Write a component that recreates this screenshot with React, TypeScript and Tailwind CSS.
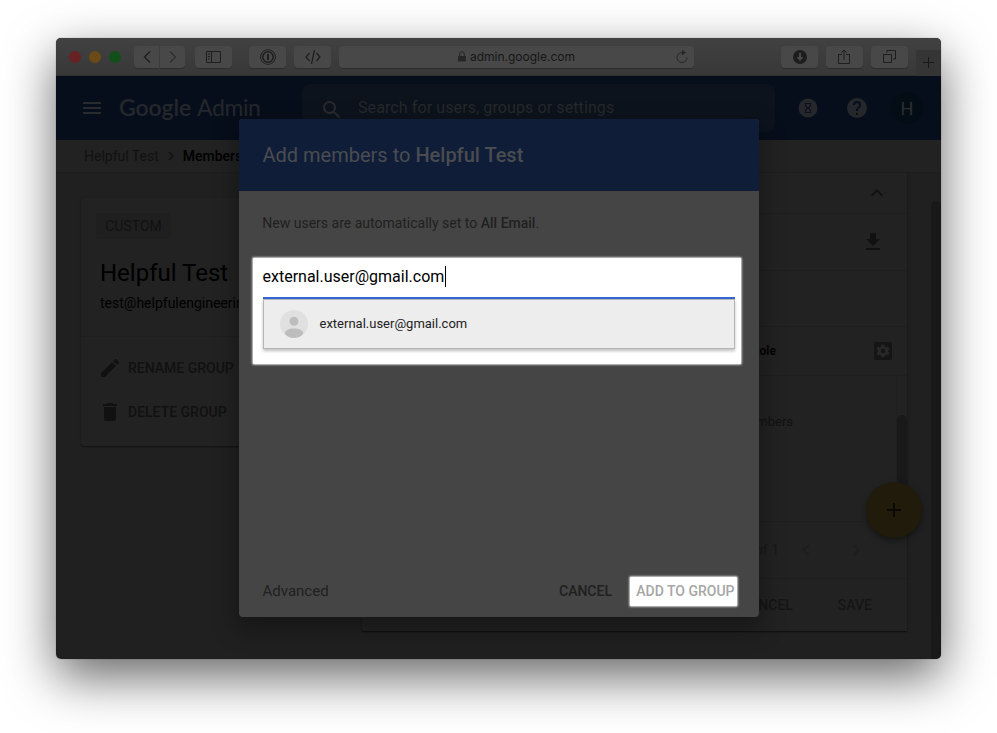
import React from "react";

const Icon = ({ d, className }: { d: string; className: string }) => (
  <svg viewBox="0 0 24 24" fill="currentColor" className={className}>
    <path d={d} />
  </svg>
);

const ToolButton = ({ className, children }: { className: string; children: React.ReactNode }) => (
  <div className={`flex h-[22px] shrink-0 items-center justify-center bg-[#484848] text-[#1d1d1d] shadow-[0_1px_0_#2e2e2e] ${className}`}>
    {children}
  </div>
);

const BrowserBar = () => (
  <div className="relative flex h-[38px] shrink-0 items-center border-b border-[#303030] bg-linear-to-b from-[#414141] to-[#383838] pl-[13px]">
    <div className="flex gap-2">
      <span className="size-3 rounded-full bg-[#672224]" />
      <span className="size-3 rounded-full bg-[#6b4a17]" />
      <span className="size-3 rounded-full bg-[#124f1b]" />
    </div>
    <ToolButton className="ml-[13px] w-[25px] rounded-l">
      <svg viewBox="0 0 10 14" className="h-[14px] w-[10px]" fill="none" stroke="currentColor" strokeWidth="1.4"><path d="M8 1.5 2.5 7 8 12.5" /></svg>
    </ToolButton>
    <ToolButton className="ml-px w-[25px] rounded-r">
      <svg viewBox="0 0 10 14" className="h-[14px] w-[10px] text-[#2d2d2d]" fill="none" stroke="currentColor" strokeWidth="1.2"><path d="M2 1.5 7.5 7 2 12.5" /></svg>
    </ToolButton>
    <ToolButton className="ml-[10px] w-[37px] rounded">
      <svg viewBox="0 0 15 12" className="h-3 w-[15px]" fill="none" stroke="currentColor"><path d="M.5.5h14v11H.5zM5.5.5v11M2 3h2M2 5.500h2M2 8h2" strokeWidth="1" /></svg>
    </ToolButton>
    <ToolButton className="ml-[17px] w-[37px] rounded">
      <svg viewBox="0 0 16 16" className="size-4" fill="none" stroke="currentColor"><circle cx="8" cy="8" r="7.400" strokeWidth=".9" /><circle cx="8" cy="8" r="5.200" strokeWidth="1.500" /><path d="M8 5v6" strokeWidth="2" /></svg>
    </ToolButton>
    <ToolButton className="ml-2 w-[37px] rounded">
      <svg viewBox="0 0 16 16" className="size-4" fill="none" stroke="currentColor" strokeWidth="1.200"><path d="M4.500 4 1 8l3.500 4M11.500 4 15 8l-3.500 4M9.500 1l-3 14" /></svg>
    </ToolButton>
    <ToolButton className="relative ml-2 w-[355px] rounded">
      <svg viewBox="0 0 8 11" className="mr-1 h-[11px] w-2 text-[#262626]"><path d="M0 5h8v5.500H0z" fill="currentColor" /><path d="M1.700 5V3a2.300 2.300 0 0 1 4.600 0v2" fill="none" stroke="currentColor" /></svg>
      <span className="mt-px font-['Inter',sans-serif] text-[12px] text-[#161616]">admin.google.com</span>
      <svg viewBox="0 0 14 14" className="absolute right-[5px] size-[14px] text-[#262626]" fill="none" stroke="currentColor"><path d="M7.500 2.500A5 5 0 1 0 12 7.500" /><path d="m7 0 4 2.600L7 5.200z" fill="currentColor" stroke="none" /></svg>
    </ToolButton>
    <ToolButton className="ml-[87px] w-[37px] rounded">
      <svg viewBox="0 0 14 14" className="size-[14px]"><circle cx="7" cy="7" r="7" fill="currentColor" /><path d="M6 3h2v4h2.500L7 11 3.500 7H6z" fill="#484848" /></svg>
    </ToolButton>
    <ToolButton className="ml-2 w-[37px] rounded">
      <svg viewBox="0 0 12 16" className="mr-px h-4 w-3" fill="none" stroke="currentColor"><path d="M4 5.500H.5v9h11v-9H8M6 11V1M3.500 3.500 6 1l2.500 2.500" /></svg>
    </ToolButton>
    <ToolButton className="ml-2 w-[37px] rounded">
      <svg viewBox="0 0 13 13" className="size-[13px]" fill="none" stroke="currentColor"><path d="M.5 4.500h8v8h-8zM4 2.500v-2h8.500V9H10" /></svg>
    </ToolButton>
    <div className="ml-2 mt-3 flex h-[26px] flex-1 items-center justify-center bg-[#353535]">
      <svg viewBox="0 0 11 11" className="size-[11px]" stroke="#181818"><path d="M5.500 0v11M0 5.500h11" /></svg>
    </div>
  </div>
);

const AdminHeader = () => (
  <div className="flex h-16 shrink-0 bg-[#070e1b] text-[#282a2e]">
    <Icon d="M3 18h18v-2H3v2zm0-5h18v-2H3v2zm0-7v2h18V6H3z" className="ml-6 mt-5 size-6" />
    <div className="ml-[15px] mt-[13px] w-[183px] whitespace-nowrap font-['Lato',sans-serif] text-[23px] leading-9 text-[#24272c]">
      <span className="font-semibold tracking-[-0.1px]">Google</span>
      <span className="ml-[6px] tracking-[-0.4px]">Admin</span>
    </div>
    <div className="mt-2 flex h-12 w-[473px] rounded-lg bg-[#0c131c]">
      <Icon d="M15.500 14h-.79l-.28-.27A6.470 6.470 0 0 0 16 9.500 6.500 6.500 0 1 0 9.500 16c1.610 0 3.090-.59 4.230-1.570l.27.28v.79l5 4.990L20.490 19l-4.990-5zm-6 0C7.010 14 5 11.990 5 9.500S7.010 5 9.500 5 14 7.010 14 9.500 11.990 14 9.500 14z" className="ml-[18px] mt-[14px] size-6" />
      <span className="ml-[14px] mt-3 text-[16px] leading-6 tracking-[0.1px] text-[#25282c]">Search for users, groups or settings</span>
    </div>
    <svg viewBox="0 0 20 20" className="ml-[23px] mt-[22px] size-5"><circle cx="10" cy="10" r="9.500" fill="#25272b" /><path d="M7.500 5.500h5v2L10.500 10l2 2.500v2h-5v-2l2-2.500-2-2.500z" fill="none" stroke="#0a101b" strokeWidth="1.200" /></svg>
    <Icon d="M12 2a10 10 0 1 0 0 20 10 10 0 0 0 0-20zm1 17h-2v-2h2v2zm2.070-7.750-.9.920C13.450 12.900 13 13.500 13 15h-2v-.5c0-1.100.45-2.100 1.170-2.830l1.240-1.260c.37-.36.59-.86.59-1.410a2 2 0 1 0-4 0H8a4 4 0 1 1 8 0c0 .88-.36 1.680-.93 2.250z" className="ml-[27px] mt-5 size-6 text-[#25272b]" />
    <span className="ml-[22px] mt-4 flex size-8 items-center justify-center rounded-full bg-[#030d16] pt-px text-[18px] text-[#2c2e30]">H</span>
  </div>
);

const GroupCard = () => (
  <div className="ml-px mt-[25px] h-[248px] w-[259px] rounded-sm bg-[#222222] shadow-[0_1px_1px_#131313,0_0_2px_#1c1c1c]">
    <div className="h-[139px] border-b border-[#1f1f1f] pt-[15px] whitespace-nowrap">
      <div className="ml-[15px] flex h-[26px] w-[75px] items-center justify-center rounded-sm bg-[#1f1f1f] text-[14px] text-[#111]">CUSTOM</div>
      <div className="ml-[19px] mt-[18px] text-[24px] leading-8 text-black">Helpful Test</div>
      <div className="ml-[19px] mt-1 text-[14px] leading-5 text-black">test@helpfulengineering.org</div>
    </div>
    <div className="flex flex-col gap-5 pl-[17px] pt-[19px] text-[14px] font-medium text-[#111]">
      <div className="flex items-center gap-[6px]"><Icon d="M3 17.250V21h3.750L17.810 9.940l-3.750-3.750L3 17.250zM20.710 7.040a1 1 0 0 0 0-1.410l-2.340-2.340a1 1 0 0 0-1.410 0l-1.830 1.830 3.750 3.750 1.830-1.830z" className="size-6" />RENAME GROUP</div>
      <div className="flex items-center gap-[6px]"><Icon d="M6 19c0 1.100.9 2 2 2h8c1.100 0 2-.9 2-2V7H6v12zM19 4h-3.500l-1-1h-5l-1 1H5v2h14V4z" className="size-6" />DELETE GROUP</div>
    </div>
  </div>
);

const MembersCard = () => (
  <div className="ml-[22px] flex h-[458px] w-[545px] flex-col bg-[#222222] text-[#111] shadow-[0_1px_1px_#111,1px_0_2px_#1d1d1d]">
    <div className="flex h-[41px] items-center justify-end border-b border-[#1e1e1e] pr-[18px]"><Icon d="m12 8-6 6 1.410 1.410L12 10.830l4.590 4.580L18 14z" className="size-6" /></div>
    <div className="flex h-[57px] items-center justify-end border-b border-[#1e1e1e] pr-[22.500px]"><Icon d="M19 9h-4V3H9v6H5l7 7 7-7zM5 18v2h14v-2H5z" className="size-6" /></div>
    <div className="h-14 border-b border-[#1e1e1e]" />
    <div className="flex h-[49px] items-center justify-between border-b border-[#1e1e1e] pl-[390px] pr-3 text-[12px] font-medium text-black">
      Role
      <svg viewBox="0 0 24 24" className="size-6 text-[#151515]" fill="currentColor"><rect x="3" y="3" width="18" height="18" rx="2" /><path d="M10.500 5.500h3l.4 1.900 1.300.8 1.900-.7 1.400 2.500-1.500 1.300v1.400l1.500 1.300-1.400 2.500-1.900-.7-1.300.8-.4 1.900h-3l-.4-1.900-1.300-.8-1.900.7L5.500 14 7 12.700v-1.400L5.500 10l1.400-2.500 1.900.7 1.300-.8z" fill="#272727" /><circle cx="12" cy="12" r="2.200" /></svg>
    </div>
    <div className="flex h-[146px] border-b border-[#1f1f1f]">
      <div className="flex-1 border-r border-[#202020] pr-[103px] pt-9 text-right text-[13px] leading-5">All members</div>
      <div className="w-[10px] pt-[39px]"><div className="h-[106px] rounded-t-full bg-[#191919]" /></div>
    </div>
    <div className="flex h-[57px] items-center justify-end border-b border-[#1e1e1e] pr-[39px] text-[14px] text-[#191919]">
      1–1 of 1
      <Icon d="M15.410 7.410 14 6l-6 6 6 6 1.410-1.410L10.830 12z" className="ml-[15px] size-6 text-[#1d1d1d]" />
      <Icon d="M10 6 8.590 7.410 13.170 12l-4.580 4.590L10 18l6-6z" className="ml-[26px] size-6 text-[#1d1d1d]" />
    </div>
    <div className="flex flex-1 items-center justify-end gap-[45px] pr-[35px] text-[14px] font-medium text-[#151515]"><span>CANCEL</span><span>SAVE</span></div>
  </div>
);

const AddMembersDialog = () => (
  <div className="absolute left-[183px] top-[81px] flex h-[498px] w-[520px] flex-col overflow-visible rounded-sm bg-[#454545] shadow-[0_10px_22px_5px_rgba(0,0,0,0.28)]">
    <div className="flex h-[72px] shrink-0 items-center rounded-t-sm bg-[#0f1d39] pl-[23.500px] text-[20px] text-[#4a4c50]">
      <span>Add members to <b className="font-medium">Helpful Test</b></span>
    </div>
    <p className="ml-[23.300px] mt-[22px] text-[14px] leading-5 text-[#202020]">New users are automatically set to <b className="font-medium">All Email</b>.</p>
    <div className="ml-[14px] mt-[25px] h-[106px] w-[488px] rounded-[1px] bg-white px-[10px] shadow-[0_0_2px_1px_rgba(255,255,255,0.75)]">
      <div className="-ml-[0.500px] flex h-[39px] items-center pb-[2px] text-[16px] text-black">external.user@gmail.com<span className="ml-[0.500px] h-[21px] w-px bg-black" /></div>
      <div className="h-[2px] w-[472px] bg-[#3367d6]" />
      <div className="flex h-[50px] w-[472px] items-center border border-[#b5b5b5] bg-[#ededed] pl-[15.500px] text-[13px] text-[#222] shadow-[0_2px_3px_rgba(0,0,0,0.25)]">
        <svg viewBox="0 0 28 28" className="mr-3 size-7"><circle cx="14" cy="14" r="14" fill="#e0e0e0" /><circle cx="14" cy="11.300" r="4.500" fill="#bdbdbd" /><path d="M4.700 23.500C5 20 9 18.500 14 18.500S23 20 23.300 23.500C21 26.500 17.500 28 14 28s-7-1.500-9.300-4.500z" fill="#bdbdbd" /></svg>
        external.user@gmail.com
      </div>
    </div>
    <div className="mt-auto flex h-[50px] items-center pb-0.5 pl-[23.500px] text-[14px] font-medium text-[#202020]">
      <span className="w-[296.500px] text-[15px] font-normal">Advanced</span>
      <span className="w-[70.500px]">CANCEL</span>
      <span className="flex h-[29px] w-[107px] items-center justify-end whitespace-nowrap rounded-[1px] bg-white pr-[2px] text-[#a6a6a6] shadow-[0_0_2px_1px_rgba(255,255,255,0.75)]">ADD TO GROUP</span>
    </div>
  </div>
);

export default function App() {
  return (
    <div className="h-[733px] w-[997px] overflow-hidden bg-white pl-14 pt-[38px] font-['Roboto',sans-serif]">
      <div className="h-[621px] w-[885px] rounded-[5px] shadow-[0_0_1px_rgba(0,0,0,0.6),0_18px_50px_rgba(0,0,0,0.6)]">
        <div className="relative flex h-full flex-col overflow-hidden rounded-[5px] bg-[#202020]">
          <BrowserBar />
          <AdminHeader />
          <div className="flex h-[33px] shrink-0 items-center border-b border-[#1e1e1e] bg-[#222222] pl-7 text-[14px] text-[#111]">
            <span>Helpful Test</span>
            <Icon d="M10 6 8.590 7.410 13.170 12l-4.580 4.590L10 18l6-6z" className="mx-[3px] size-[18px]" />
            <span className="font-medium text-black">Members</span>
          </div>
          <div className="flex flex-1 pl-6">
            <GroupCard />
            <MembersCard />
            <div className="ml-6 mt-7 flex-1 rounded-t-full bg-[#191919]" />
          </div>
          <div className="absolute left-[810px] top-[444px] flex size-14 items-center justify-center rounded-full bg-[#211b0c] text-[#0b0904] shadow-[0_3px_6px_rgba(0,0,0,0.4)]">
            <Icon d="M19 13h-6v6h-2v-6H5v-2h6V5h2v6h6v2z" className="size-6" />
          </div>
          <AddMembersDialog />
        </div>
      </div>
    </div>
  );
}
